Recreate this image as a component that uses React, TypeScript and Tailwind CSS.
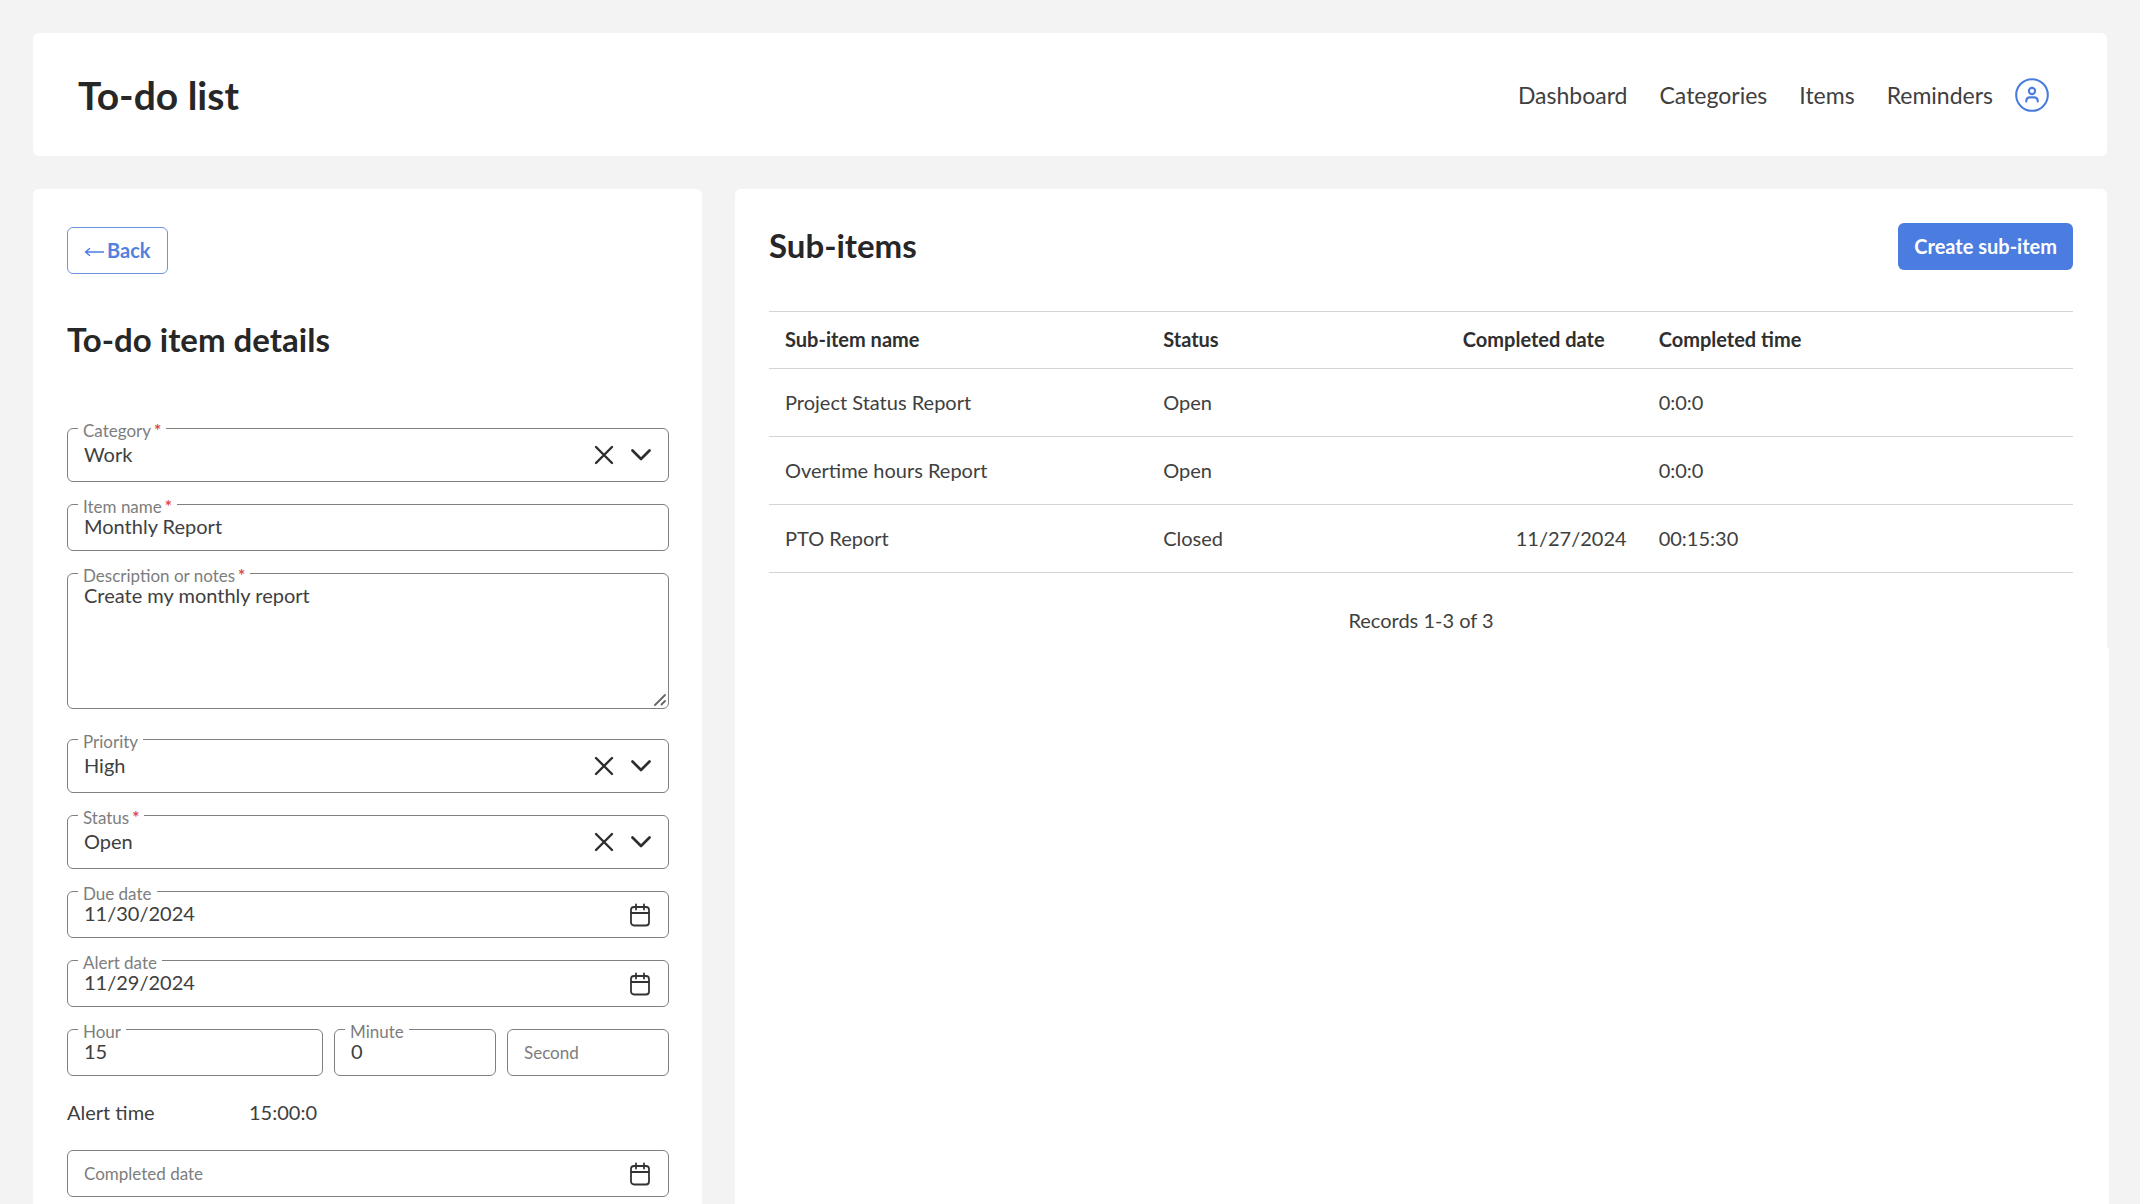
import { useState } from "react";
import type { ReactNode } from "react";

const labelText = "text-[17px] leading-5 text-[#7d7d7d]";
const boxBorder = "rounded-md border border-[#808080]";

function XIcon() {
  return (
    <svg viewBox="0 0 20 20" className="size-5" fill="none" stroke="#2e2e2e" strokeWidth="2.4" strokeLinecap="round">
      <path d="M2 2L18 18M18 2L2 18" />
    </svg>
  );
}

function ChevronIcon() {
  return (
    <svg viewBox="0 0 20 20" className="size-5" fill="none" stroke="#2e2e2e" strokeWidth="2.7" strokeLinecap="round" strokeLinejoin="round">
      <path d="M1.5 5.5L10 14L18.5 5.5" />
    </svg>
  );
}

function CalendarIcon() {
  return (
    <svg viewBox="0 0 20 24" className="h-6 w-5" fill="none" stroke="#333" strokeWidth="1.8" strokeLinecap="round">
      <rect x="1" y="4" width="18" height="18.5" rx="3" />
      <path d="M1 10H19M6 1.5V6.5M14 1.5V6.5M6 4H14" />
    </svg>
  );
}

function UserIcon() {
  return (
    <svg viewBox="0 0 34 34" className="size-[34px]" fill="none" stroke="#4a7ddf" strokeWidth="2.1" strokeLinecap="round">
      <circle cx="17" cy="17" r="15.8" />
      <circle cx="17" cy="13" r="3.1" />
      <path d="M11.3 23.6V23C11.3 20.6 13 19.4 15 19.4H19C21 19.4 22.7 20.6 22.7 23V23.6" />
    </svg>
  );
}

function ArrowIcon() {
  return (
    <svg viewBox="0 0 20 12" className="mt-1 h-3 w-5" fill="none" stroke="#4a7ddf" strokeWidth="1.4">
      <path d="M20 6H1.5M6 2.2L1.5 6L6 9.8" />
    </svg>
  );
}

type FieldProps = {
  id: string;
  label: string;
  required?: boolean;
  empty?: boolean;
  children: ReactNode;
};

function Field({ id, label, required, empty, children }: FieldProps) {
  return (
    <div className="relative">
      {children}
      {!empty && (
        <label htmlFor={id} className={`absolute -top-[7px] left-[11px] bg-white px-[5px] ${labelText}`}>
          {label}
          {required && <span className="ml-[3px] font-bold text-[#dc4a4a]">*</span>}
        </label>
      )}
    </div>
  );
}

function TextField({ id, label, value, required, calendar }: { id: string; label: string; value: string; required?: boolean; calendar?: boolean }) {
  return (
    <Field id={id} label={label} required={required} empty={!value}>
      <input
        id={id}
        defaultValue={value}
        placeholder={value ? undefined : label}
        aria-label={value ? undefined : label}
        className={`block h-[47px] w-full bg-white px-4 pb-[3px] text-[20px] placeholder:text-[17px] placeholder:text-[#7d7d7d] ${boxBorder}`}
      />
      {calendar && (
        <button type="button" aria-label={`Pick ${label}`} className="absolute inset-y-0 right-[19px] flex items-center">
          <CalendarIcon />
        </button>
      )}
    </Field>
  );
}

function SelectField({ id, label, options, required }: { id: string; label: string; options: string[]; required?: boolean }) {
  const [value, setValue] = useState(options[0]);
  return (
    <Field id={id} label={label} required={required}>
      <select
        id={id}
        value={value}
        onChange={(e) => setValue(e.target.value)}
        className={`block h-[54px] w-full appearance-none bg-white pr-24 pb-[3px] pl-4 text-[20px] ${boxBorder}`}
      >
        <option value="" />
        {options.map((o) => (
          <option key={o}>{o}</option>
        ))}
      </select>
      <div className="pointer-events-none absolute inset-y-0 right-[18px] flex items-center gap-[17px]">
        <button type="button" aria-label={`Clear ${label}`} onClick={() => setValue("")} className="pointer-events-auto">
          <XIcon />
        </button>
        <ChevronIcon />
      </div>
    </Field>
  );
}

const rows = [
  { name: "Project Status Report", status: "Open", date: "", time: "0:0:0" },
  { name: "Overtime hours Report", status: "Open", date: "", time: "0:0:0" },
  { name: "PTO Report", status: "Closed", date: "11/27/2024", time: "00:15:30" },
];

export default function App() {
  return (
    <div className="flex min-h-screen flex-col gap-[33px] bg-[#f3f3f3] px-[33px] pt-[33px] font-['Lato',sans-serif] text-[20px] leading-7 text-[#404040]">
      <header className="flex items-center justify-between rounded-md bg-white py-9 pr-[58px] pl-[45px]">
        <h1 className="pt-0.5 text-[39px] leading-[49px] font-bold text-[#272727]">To-do list</h1>
        <nav className="flex items-center gap-8 text-[23px]">
          <a href="#dashboard">Dashboard</a>
          <a href="#categories">Categories</a>
          <a href="#items">Items</a>
          <div className="flex items-center gap-[22px]">
            <a href="#reminders">Reminders</a>
            <button type="button" aria-label="Account">
              <UserIcon />
            </button>
          </div>
        </nav>
      </header>

      <main className="grid grow grid-cols-[669fr_1372fr] gap-[33px]">
        <section className="rounded-t-md bg-white pt-[38px] pr-[33px] pb-1 pl-[34px]">
          <button type="button" className="flex h-[47px] items-center gap-[3px] rounded-md border border-[#6f93e2] px-4 pb-0.5 text-[20px] font-bold text-[#5480de]">
            <ArrowIcon />
            Back
          </button>
          <h2 className="mt-[43px] text-[33px] leading-[44px] font-bold text-[#272727]">To-do item details</h2>

          <form className="mt-[67px]" onSubmit={(e) => e.preventDefault()}>
            <div className="flex flex-col gap-[22px]">
              <SelectField id="category" label="Category" options={["Work", "Home"]} required />
              <TextField id="item-name" label="Item name" value="Monthly Report" required />
              <Field id="notes" label="Description or notes" required>
                <textarea
                  id="notes"
                  defaultValue="Create my monthly report"
                  className={`block h-[136px] w-full resize-none bg-white px-4 py-[7px] text-[20px] leading-7 ${boxBorder}`}
                />
                <svg viewBox="0 0 12 12" className="pointer-events-none absolute right-[3px] bottom-[3px] size-3" stroke="#666" strokeWidth="1.8" strokeLinecap="round">
                  <path d="M1 11L11 1M7.5 10.5L11 7" />
                </svg>
              </Field>
            </div>
            <div className="mt-[30px] flex flex-col gap-[22px]">
              <SelectField id="priority" label="Priority" options={["High", "Medium", "Low"]} />
              <SelectField id="status" label="Status" options={["Open", "Closed"]} required />
              <TextField id="due" label="Due date" value="11/30/2024" calendar />
              <TextField id="alert" label="Alert date" value="11/29/2024" calendar />
              <div className="grid grid-cols-[256fr_162fr_162fr] gap-[11px]">
                <TextField id="hour" label="Hour" value="15" />
                <TextField id="minute" label="Minute" value="0" />
                <TextField id="second" label="Second" value="" />
              </div>
              <dl className="flex pb-0.5">
                <dt className="w-[182px]">Alert time</dt>
                <dd>15:00:0</dd>
              </dl>
              <TextField id="completed" label="Completed date" value="" calendar />
            </div>
          </form>
        </section>

        <section className="flex flex-col">
          <div className="rounded-t-md bg-white px-[34px] pt-[34px] pb-[14px]">
            <div className="flex items-center justify-between">
              <h2 className="pb-[3px] text-[33px] leading-[44px] font-bold text-[#272727]">Sub-items</h2>
              <button type="button" className="h-[47px] rounded-md bg-[#4a7ddf] px-4 pb-0.5 text-[20px] font-bold text-white">
                Create sub-item
              </button>
            </div>
            <table className="mt-[41px] w-full table-fixed border-t border-[#d4d4d4] text-left">
              <colgroup>
                <col className="w-[29%]" />
                <col className="w-[19%]" />
                <col className="w-[19%]" />
                <col className="w-[33%]" />
              </colgroup>
              <thead>
                <tr className="h-[57px] border-b border-[#d4d4d4] text-[#2f2f2f]">
                  <th className="px-4 pb-0.5 font-bold">Sub-item name</th>
                  <th className="px-4 pb-0.5 font-bold">Status</th>
                  <th className="pr-[38px] pb-0.5 pl-4 text-right font-bold">Completed date</th>
                  <th className="px-4 pb-0.5 font-bold">Completed time</th>
                </tr>
              </thead>
              <tbody>
                {rows.map((r) => (
                  <tr key={r.name} className="h-[68px] border-b border-[#d4d4d4]">
                    <td className="px-4 pb-0.5">{r.name}</td>
                    <td className="px-4 pb-0.5">{r.status}</td>
                    <td className="px-4 pb-0.5 text-right">{r.date}</td>
                    <td className="px-4 pb-0.5">{r.time}</td>
                  </tr>
                ))}
              </tbody>
            </table>
            <p className="mt-[33px] text-center">Records 1-3 of 3</p>
          </div>
          <div className="-mr-0.5 grow bg-white" />
        </section>
      </main>
    </div>
  );
}
